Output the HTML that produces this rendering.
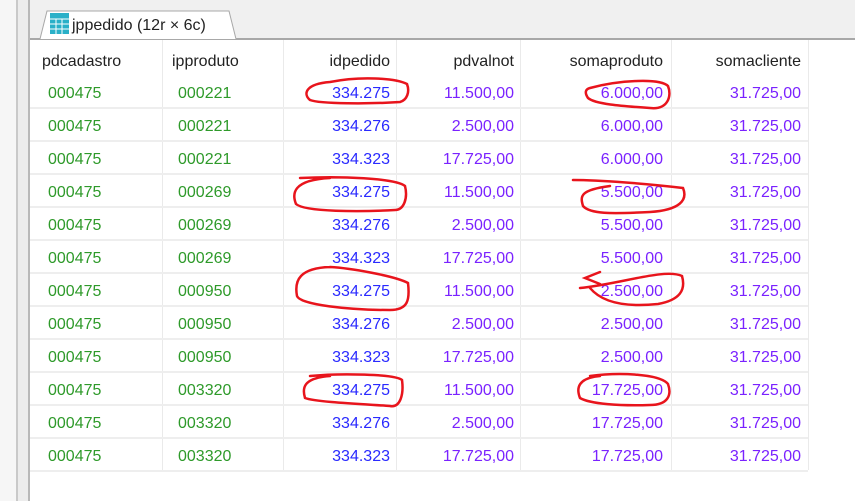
<!DOCTYPE html>
<html><head><meta charset="utf-8"><style>
*{margin:0;padding:0;box-sizing:border-box}
body{width:855px;height:501px;overflow:hidden;background:#fff;font-family:"Liberation Sans",sans-serif;position:relative}
.a{position:absolute}
.t{position:absolute;font-size:16px;line-height:20px;white-space:nowrap}
.g{color:#2e9a2a}.b{color:#2a2aff}.p{color:#7a22ff}.h{color:#222}
</style></head><body>
<div class="a" style="left:0;top:0;width:16px;height:501px;background:#f6f6f6"></div>
<div class="a" style="left:16px;top:0;width:2px;height:501px;background:#c9c9c9"></div>
<div class="a" style="left:18px;top:0;width:10px;height:501px;background:#ececec"></div>
<div class="a" style="left:28px;top:0;width:2px;height:501px;background:#b8b8b8"></div>
<div class="a" style="left:30px;top:0;width:825px;height:38px;background:#f0f0f0"></div>
<div class="a" style="left:30px;top:38px;width:825px;height:2px;background:#a8a8a8"></div>
<svg class="a" style="left:0;top:0" width="855" height="501">
<path d="M40 39 L47 11 L229 11 L236 39" fill="#fff" stroke="#a8a8a8" stroke-width="1"/>
<rect x="50" y="13" width="19" height="21" fill="#2ab0c8"/>
<g stroke="#fff" stroke-width="1"><line x1="50" y1="19" x2="69" y2="19"/><line x1="50" y1="24" x2="69" y2="24"/><line x1="50" y1="29" x2="69" y2="29"/><line x1="56" y1="19" x2="56" y2="34"/><line x1="62" y1="19" x2="62" y2="34"/></g>
<g stroke="#eaeaea" stroke-width="1">
<line x1="162.5" y1="40" x2="162.5" y2="470"/><line x1="283.5" y1="40" x2="283.5" y2="470"/><line x1="396.5" y1="40" x2="396.5" y2="470"/><line x1="520.5" y1="40" x2="520.5" y2="470"/><line x1="671.5" y1="40" x2="671.5" y2="470"/><line x1="808.5" y1="40" x2="808.5" y2="470"/>
</g>
<g stroke="#eeeeee" stroke-width="2" id="rl"></g>
</svg>
<div class="t h" style="left:72px;top:16px;font-size:16px">jppedido (12r × 6c)</div>
<div id="grid"></div>
<svg class="a" style="left:0;top:0" width="855" height="501" fill="none" stroke="#e8141c" stroke-width="2.5" stroke-linecap="round">
<path d="M330 82 C360 76 395 78 407 84 C410 92 407 100 400 102 C370 104 320 104 310 100 C303 94 305 84 330 82"/>
<path d="M590 88 C620 80 660 78 668 86 C672 96 668 110 650 108 C620 106 595 104 588 98 C584 92 586 89 590 88"/>
<path d="M300 178 C340 176 395 178 405 186 C408 198 404 210 395 210 C360 212 305 212 296 204 C292 194 292 180 330 178"/>
<path d="M573 180 C600 180 650 184 683 188 C688 200 680 210 650 212 C610 214 590 214 583 206 C580 196 580 190 610 186"/>
<path d="M330 267 C350 268 395 276 408 283 C410 300 408 310 390 310 C350 310 300 305 297 296 C294 280 300 268 330 267"/>
<path d="M580 288 C620 284 665 268 682 276 C686 290 680 300 658 304 C620 308 600 300 590 288 M600 284 L585 278 L600 272"/>
<path d="M310 376 C340 373 395 374 402 380 C404 395 400 408 390 406 C360 404 315 402 305 398 C302 388 303 378 330 376"/>
<path d="M590 376 C620 372 660 374 668 384 C672 395 668 405 650 405 C620 406 590 404 580 398 C576 388 578 378 600 376"/>
</svg>
<script>
var cols=[[48,162,'l'],[178,283,'l'],[283,390,'r'],[396,514,'r'],[520,663,'r'],[671,801,'r']];
var hx=[42,172];
var hd=['pdcadastro','ipproduto','idpedido','pdvalnot','somaproduto','somacliente'];
var ip=['000221','000221','000221','000269','000269','000269','000950','000950','000950','003320','003320','003320'];
var id=['334.275','334.276','334.323'];var pv=['11.500,00','2.500,00','17.725,00'];
var sp=['6.000,00','5.500,00','2.500,00','17.725,00'];
var h='';
function cell(c,y,txt,cls){var s=cols[c];if(s[2]=='l')h+='<div class="t '+cls+'" style="left:'+s[0]+'px;top:'+y+'px">'+txt+'</div>';else h+='<div class="t '+cls+'" style="right:'+(855-s[1])+'px;top:'+y+'px">'+txt+'</div>';}
for(var c=0;c<6;c++){var s=cols[c];if(s[2]=='l')h+='<div class="t h" style="left:'+hx[c]+'px;top:52px">'+hd[c]+'</div>';else h+='<div class="t h" style="right:'+(855-s[1])+'px;top:52px">'+hd[c]+'</div>';}
var rl='';
for(var r=0;r<12;r++){var y=84+33*r;
cell(0,y,'000475','g');cell(1,y,ip[r],'g');cell(2,y,id[r%3],'b');cell(3,y,pv[r%3],'p');cell(4,y,sp[Math.floor(r/3)],'p');cell(5,y,'31.725,00','p');
rl+='<line x1="30" y1="'+(108+33*r)+'" x2="808" y2="'+(108+33*r)+'"/>';}
document.getElementById('grid').innerHTML=h;
document.getElementById('rl').innerHTML=rl;
</script>
</body></html>
